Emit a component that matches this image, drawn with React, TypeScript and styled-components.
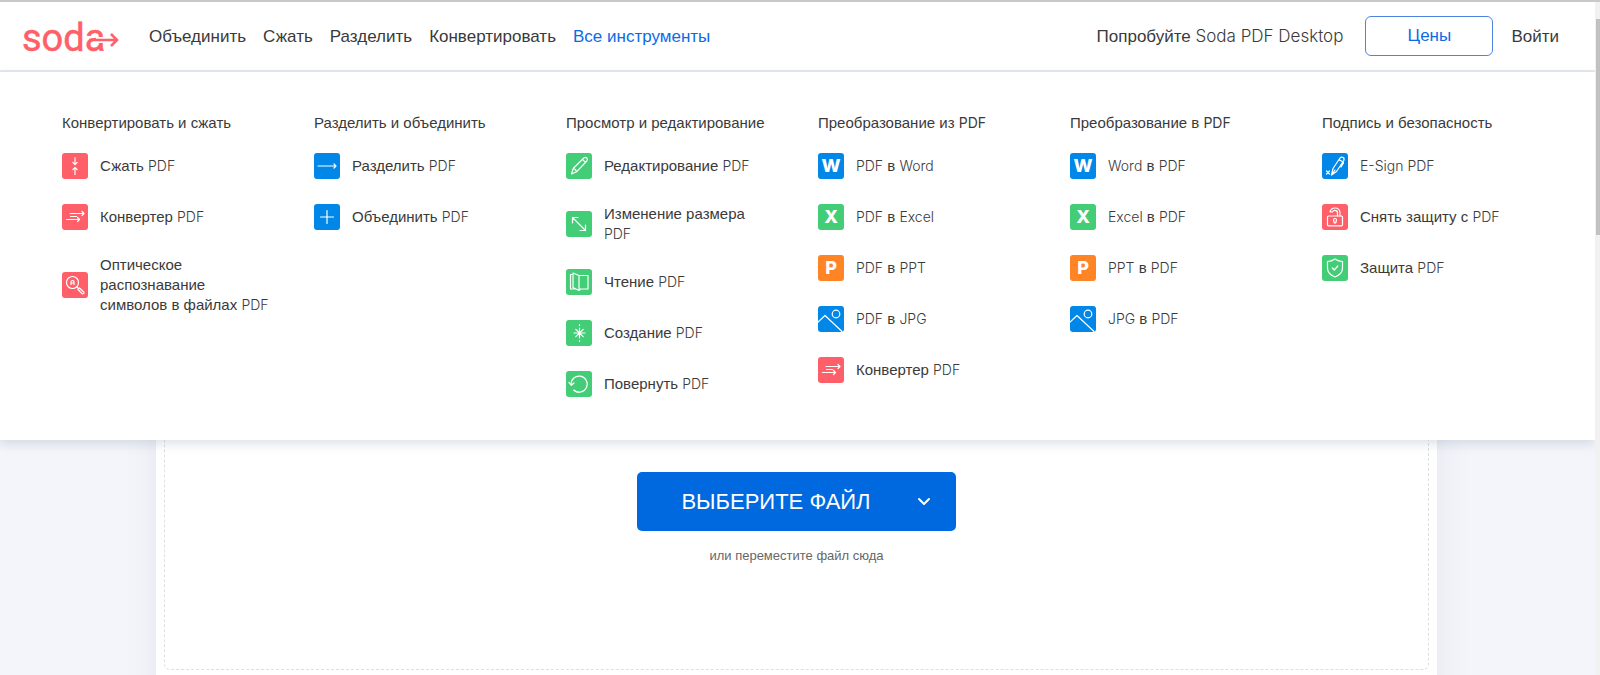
import React from "react";
import styled, { createGlobalStyle, css } from "styled-components";

const colors = {
  red: "#ff5f68",
  blue: "#0087e8",
  green: "#43cd77",
  orange: "#ff8426",
  action: "#0069e0",
  link: "#0b6be6",
  text: "#3a3a3a",
};

const GlobalStyle = createGlobalStyle`
  *, *::before, *::after { box-sizing: border-box; }
  body {
    margin: 0;
    color: ${colors.text};
    background: #f4f5fa;
    font-family: "Liberation Sans", Arial, sans-serif;
    overflow: hidden;
  }
  ul, h2, p { margin: 0; padding: 0; list-style: none; font-weight: 400; }
  a { color: inherit; text-decoration: none; }
  button { font-family: inherit; cursor: pointer; }
`;

const Window = styled.div`
  display: flex;
  height: 100vh;
  border-top: 2px solid #c9c9c9;
`;

const Page = styled.div`
  position: relative;
  flex: 1;
  min-width: 0;
  overflow: hidden;
`;

const ScrollTrack = styled.div`
  width: 5px;
  padding-top: 17px;
  background: #f1f1f1;
`;

const ScrollThumb = styled.div`
  height: 33%;
  margin-left: 1px;
  background: #c1c1c1;
`;

const Header = styled.header`
  display: flex;
  align-items: center;
  height: 70px;
  padding: 0 36px 0 22px;
  background: #fff;
  border-bottom: 2px solid #e4e9ed;
`;

const Logo = styled.a`
  display: block;
  margin-right: 29px;
  svg { display: block; }
  text { font: 400 38px/44px Roboto, sans-serif; }
`;

const Nav = styled.nav<{ $end?: boolean }>`
  display: flex;
  align-items: center;
  gap: ${(p) => (p.$end ? 18 : 17)}px;
  font-size: 17px;
  line-height: 24px;
  white-space: nowrap;
  ${(p) => p.$end && css`margin-left: auto;`}
`;

const NavLink = styled.a<{ $active?: boolean }>`
  padding-top: 1px;
  color: ${(p) => (p.$active ? colors.link : colors.text)};
`;

const PriceButton = styled.button`
  width: 128px;
  height: 40px;
  margin-left: 4px;
  color: ${colors.link};
  font-size: 17px;
  background: #fff;
  border: 1px solid #4f83e2;
  border-radius: 6px;
`;

const LatinRun = styled.span`
  font-family: Inter, sans-serif;
  font-weight: 300;
  line-height: 1;
`;

const Menu = styled.section`
  position: absolute;
  z-index: 2;
  top: 70px;
  left: 0;
  right: 0;
  display: grid;
  grid-template-columns: repeat(6, 1fr);
  padding: 40px 21px 43px 62px;
  background: #fff;
  box-shadow: 0 4px 10px rgba(110, 130, 160, 0.24);
`;

const ColumnTitle = styled.h2`
  margin-bottom: 19px;
  font-size: 15px;
  line-height: 22px;
  ${LatinRun} { font-size: 14px; font-weight: 400; }
`;

const ToolList = styled.ul`
  display: grid;
  gap: 25px;
`;

const ToolLink = styled.a`
  display: flex;
  align-items: center;
  gap: 12px;
  min-height: 26px;
  font-size: 15px;
  line-height: 20px;
  ${LatinRun} { font-size: 14px; }
`;

const ToolLabel = styled.span`
  max-width: 170px;
`;

const Tile = styled.span<{ $color: string }>`
  display: grid;
  place-items: center;
  flex: none;
  width: 26px;
  height: 26px;
  color: #fff;
  font: 800 18px/26px Inter, sans-serif;
  background: ${(p) => p.$color};
  border-radius: 3px;
  svg { display: block; }
`;

const Workspace = styled.main`
  padding: 180px 158px 0 156px;
`;

const Card = styled.div`
  padding: 8px 8px 60px;
  background: #fff;
  box-shadow: 0 0 30px rgba(120, 130, 170, 0.12);
`;

const DropZone = styled.div`
  display: flex;
  flex-direction: column;
  align-items: center;
  padding: 211px 0 103px;
  border: 1px dashed #dfdfdf;
  border-radius: 6px;
`;

const SplitButton = styled.div`
  display: flex;
  height: 59px;
  overflow: hidden;
  background: ${colors.action};
  border-radius: 5px;
`;

const SelectFile = styled.button`
  padding: 0 22px 0 44px;
  color: #fff;
  font-size: 22px;
  background: none;
  border: 0;
`;

const SelectSource = styled.button`
  display: grid;
  place-items: center;
  width: 63px;
  padding: 0;
  color: #fff;
  background: none;
  border: 0;
`;

const Hint = styled.p`
  margin-top: 15px;
  color: #666;
  font-size: 13px;
  line-height: 20px;
`;

function Label({ text }: { text: string }) {
  return (
    <>
      {text.split(/([A-Za-z-]+(?: [A-Za-z-]+)*)/).map((part, i) =>
        i % 2 ? <LatinRun key={i}>{part}</LatinRun> : part
      )}
    </>
  );
}

const drawings: Record<string, React.ReactNode> = {
  compress: <path d="M13 4.500v7M10.800 9.300l2.200 2.200L15.200 9.300M13 21.500v-7M10.800 16.700l2.200-2.200 2.200 2.200" />,
  convert: <path d="M8 9.500h14M20 7.500l2 2-2 2M8.500 12.500h6M4.500 15.500h13M15.500 13.500l2 2-2 2" />,
  ocr: (
    <>
      <circle cx="10.500" cy="10.500" r="6" />
      <path d="M9 12.500V9.500q0-1 1.500-1T12 9.500v3M9 11h3M15 15l1.500 1.500" />
      <path d="M17.500 16l4.500 4.300q.3 1.500-1.500 1.700L16 17.500z" />
    </>
  ),
  arrow: <path d="M4 13h18M20 11l2 2-2 2" />,
  plus: <path d="M13 6.500v13M6.500 13h13" />,
  pencil: <path d="M5.500 21l1.700-5.500L17.800 5q1.800-1.300 3 0t0 3L10.500 18.800zM16.500 6.300l3 3M7.200 15.500q2.700.5 3.300 3.300" />,
  resize: <path d="M6.500 6.500l13 13M6.500 12V6.500H12M14 19.500h5.500V14" />,
  book: (
    <path d="M7 4l6 2.500V21.500L7 18.500zM7 5.500H4.500v14.500H10l3 1.500 1.500-1.500H22V6.500h-9" />
  ),
  spark: (
    <>
      <path d="M13.500 8v10M8 13h11M9.800 9.300l7.400 7.400M17.200 9.300l-7.400 7.400" />
      <path d="M13.500 4.500v1M13.500 20.500v1" />
    </>
  ),
  rotate: (
    <>
      <path d="M5.200 14A8 8 0 1 1 8 19.200" />
      <path d="M8 19.200a8 8 0 0 0 4 2" strokeDasharray="1 1" />
      <path d="M3 11.500l2.300 2.700 2.700-2.200" />
    </>
  ),
  image: (
    <>
      <circle cx="18" cy="8" r="3.800" />
      <path d="M0 16L7 9.500 24 25.500" />
    </>
  ),
  sign: (
    <>
      <path d="M9.500 22l1.500-6.500L18 5q1.500-1.500 3.200-.5t.3 3.500L14.500 18.500zM17 6.500l4 2.500M21 8.500l.5 1.500-2.500 4M9.500 22l3.500-5" />
      <path d="M4.500 18l3 3M7.500 18l-3 3" />
    </>
  ),
  unlock: (
    <>
      <rect x="5.500" y="12" width="15" height="9.800" rx="1" />
      <path d="M18 12V8.500q-.5-4.500-5-4.500-4 0-5 4h2.500q.5-1.700 2.300-1.700 2.700 0 2.700 2.700V12" />
      <path d="M13 14.500q1.500 0 1.500 1.500l-.8 3h-1.400l-.8-3q0-1.500 1.500-1.500z" />
    </>
  ),
  shield: (
    <>
      <path d="M13 4q3.500 2.500 7.500 2.500V13q0 6-7.500 9-7.500-3-7.500-9V6.500Q9.500 6.500 13 4z" />
      <path d="M10.300 13l2 2 3.500-4" />
    </>
  ),
};

function Icon({ name, color }: { name: string; color: string }) {
  return (
    <Tile $color={color} aria-hidden="true">
      {drawings[name] ? (
        <svg width="26" height="26" viewBox="0 0 26 26" fill="none" stroke="currentColor" strokeWidth="1.200" strokeLinecap="round" strokeLinejoin="round">
          {drawings[name]}
        </svg>
      ) : (
        name
      )}
    </Tile>
  );
}

const { red, blue, green, orange } = colors;

const columns: { title: string; tools: [string, string, string][] }[] = [
  {
    title: "Конвертировать и сжать",
    tools: [
      ["compress", red, "Сжать PDF"],
      ["convert", red, "Конвертер PDF"],
      ["ocr", red, "Оптическое распознавание символов в файлах PDF"],
    ],
  },
  {
    title: "Разделить и объединить",
    tools: [
      ["arrow", blue, "Разделить PDF"],
      ["plus", blue, "Объединить PDF"],
    ],
  },
  {
    title: "Просмотр и редактирование",
    tools: [
      ["pencil", green, "Редактирование PDF"],
      ["resize", green, "Изменение размера PDF"],
      ["book", green, "Чтение PDF"],
      ["spark", green, "Создание PDF"],
      ["rotate", green, "Повернуть PDF"],
    ],
  },
  {
    title: "Преобразование из PDF",
    tools: [
      ["W", blue, "PDF в Word"],
      ["X", green, "PDF в Excel"],
      ["P", orange, "PDF в PPT"],
      ["image", blue, "PDF в JPG"],
      ["convert", red, "Конвертер PDF"],
    ],
  },
  {
    title: "Преобразование в PDF",
    tools: [
      ["W", blue, "Word в PDF"],
      ["X", green, "Excel в PDF"],
      ["P", orange, "PPT в PDF"],
      ["image", blue, "JPG в PDF"],
    ],
  },
  {
    title: "Подпись и безопасность",
    tools: [
      ["sign", blue, "E-Sign PDF"],
      ["unlock", red, "Снять защиту с PDF"],
      ["shield", green, "Защита PDF"],
    ],
  },
];

export default function App() {
  return (
    <>
      <GlobalStyle />
      <Window>
        <Page>
          <Header>
            <Logo href="#" aria-label="Soda PDF">
              <svg width="98" height="48" viewBox="0 0 98 48">
                <text x="0" y="39" fill={red} stroke={red} strokeWidth="0.500">soda</text>
                <path d="M74 28h10" fill="none" stroke="#fff" strokeWidth="6" />
                <path d="M67 28h28M89 22l6 6-6 6" fill="none" stroke={red} strokeWidth="2.500" />
              </svg>
            </Logo>
            <Nav>
              <NavLink href="#">Объединить</NavLink>
              <NavLink href="#">Сжать</NavLink>
              <NavLink href="#">Разделить</NavLink>
              <NavLink href="#">Конвертировать</NavLink>
              <NavLink href="#" $active>Все инструменты</NavLink>
            </Nav>
            <Nav $end>
              <NavLink href="#"><Label text="Попробуйте Soda PDF Desktop" /></NavLink>
              <PriceButton type="button">Цены</PriceButton>
              <NavLink href="#">Войти</NavLink>
            </Nav>
          </Header>
          <Menu>
            {columns.map((column) => (
              <div key={column.title}>
                <ColumnTitle><Label text={column.title} /></ColumnTitle>
                <ToolList>
                  {column.tools.map(([icon, color, label]) => (
                    <li key={label}>
                      <ToolLink href="#">
                        <Icon name={icon} color={color} />
                        <ToolLabel><Label text={label} /></ToolLabel>
                      </ToolLink>
                    </li>
                  ))}
                </ToolList>
              </div>
            ))}
          </Menu>
          <Workspace>
            <Card>
              <DropZone>
                <SplitButton>
                  <SelectFile type="button">ВЫБЕРИТЕ ФАЙЛ</SelectFile>
                  <SelectSource type="button" aria-label="Другие источники">
                    <svg width="14" height="10" viewBox="0 0 14 10" fill="none" stroke="currentColor" strokeWidth="2" strokeLinecap="round" strokeLinejoin="round">
                      <path d="M2 2l5 5 5-5" />
                    </svg>
                  </SelectSource>
                </SplitButton>
                <Hint>или переместите файл сюда</Hint>
              </DropZone>
            </Card>
          </Workspace>
        </Page>
        <ScrollTrack>
          <ScrollThumb />
        </ScrollTrack>
      </Window>
    </>
  );
}
